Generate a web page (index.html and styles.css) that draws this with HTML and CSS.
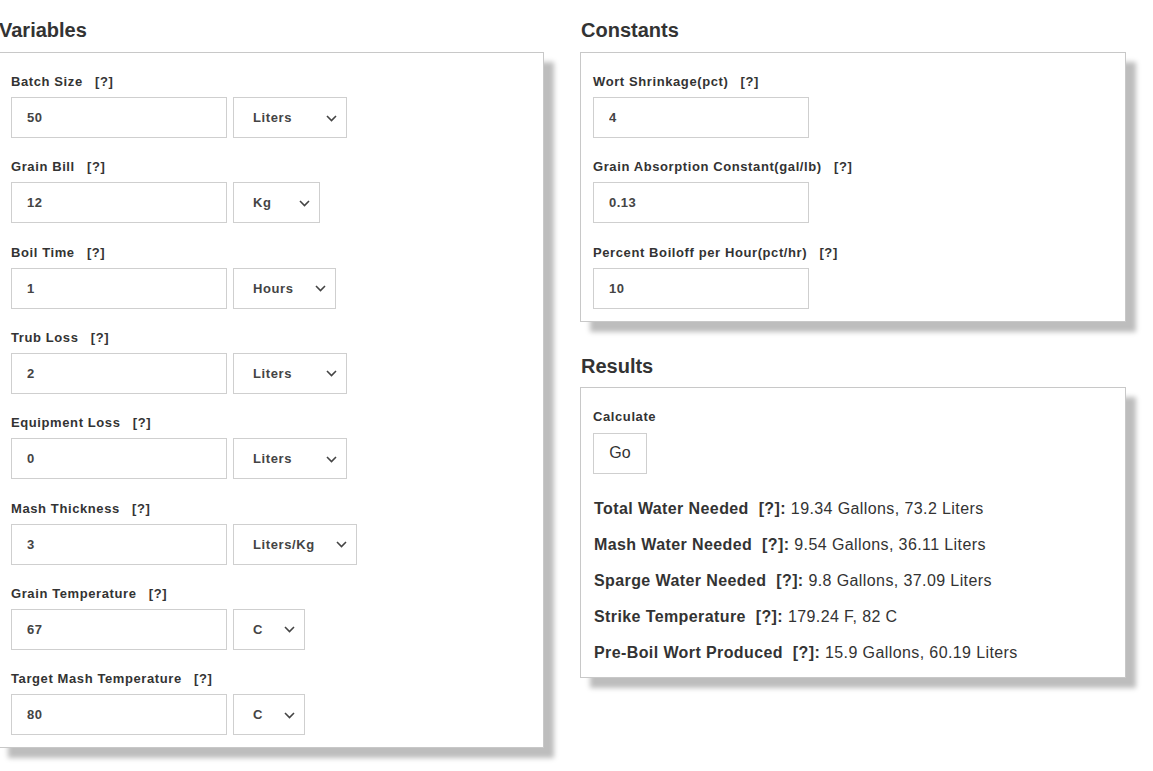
FILE: index.html
```html
<!DOCTYPE html>
<html>
<head>
<meta charset="utf-8">
<link rel="stylesheet" href="styles.css">
</head>
<body>
<div class="page">
  <section class="col">
    <h2 class="heading">Variables</h2>
    <div class="panel">
      <div class="field">
        <label class="label">Batch Size <span class="help">[?]</span></label>
        <div class="controls">
          <input class="num" type="text" value="50">
          <div class="select w-liters"><span>Liters</span><svg width="11" height="7" viewBox="0 0 11 7"><polyline points="1,1 5.5,5.5 10,1" fill="none" stroke="#444" stroke-width="1.6"/></svg></div>
        </div>
      </div>
      <div class="field">
        <label class="label">Grain Bill <span class="help">[?]</span></label>
        <div class="controls">
          <input class="num" type="text" value="12">
          <div class="select w-kg"><span>Kg</span><svg width="11" height="7" viewBox="0 0 11 7"><polyline points="1,1 5.5,5.5 10,1" fill="none" stroke="#444" stroke-width="1.6"/></svg></div>
        </div>
      </div>
      <div class="field">
        <label class="label">Boil Time <span class="help">[?]</span></label>
        <div class="controls">
          <input class="num" type="text" value="1">
          <div class="select w-hours"><span>Hours</span><svg width="11" height="7" viewBox="0 0 11 7"><polyline points="1,1 5.5,5.5 10,1" fill="none" stroke="#444" stroke-width="1.6"/></svg></div>
        </div>
      </div>
      <div class="field">
        <label class="label">Trub Loss <span class="help">[?]</span></label>
        <div class="controls">
          <input class="num" type="text" value="2">
          <div class="select w-liters"><span>Liters</span><svg width="11" height="7" viewBox="0 0 11 7"><polyline points="1,1 5.5,5.5 10,1" fill="none" stroke="#444" stroke-width="1.6"/></svg></div>
        </div>
      </div>
      <div class="field">
        <label class="label">Equipment Loss <span class="help">[?]</span></label>
        <div class="controls">
          <input class="num" type="text" value="0">
          <div class="select w-liters"><span>Liters</span><svg width="11" height="7" viewBox="0 0 11 7"><polyline points="1,1 5.5,5.5 10,1" fill="none" stroke="#444" stroke-width="1.6"/></svg></div>
        </div>
      </div>
      <div class="field">
        <label class="label">Mash Thickness <span class="help">[?]</span></label>
        <div class="controls">
          <input class="num" type="text" value="3">
          <div class="select w-lkg"><span>Liters/Kg</span><svg width="11" height="7" viewBox="0 0 11 7"><polyline points="1,1 5.5,5.5 10,1" fill="none" stroke="#444" stroke-width="1.6"/></svg></div>
        </div>
      </div>
      <div class="field">
        <label class="label">Grain Temperature <span class="help">[?]</span></label>
        <div class="controls">
          <input class="num" type="text" value="67">
          <div class="select w-c"><span>C</span><svg width="11" height="7" viewBox="0 0 11 7"><polyline points="1,1 5.5,5.5 10,1" fill="none" stroke="#444" stroke-width="1.6"/></svg></div>
        </div>
      </div>
      <div class="field">
        <label class="label">Target Mash Temperature <span class="help">[?]</span></label>
        <div class="controls">
          <input class="num" type="text" value="80">
          <div class="select w-c"><span>C</span><svg width="11" height="7" viewBox="0 0 11 7"><polyline points="1,1 5.5,5.5 10,1" fill="none" stroke="#444" stroke-width="1.6"/></svg></div>
        </div>
      </div>
    </div>
  </section>

  <section class="col">
    <h2 class="heading">Constants</h2>
    <div class="panel">
      <div class="field">
        <label class="label">Wort Shrinkage(pct) <span class="help">[?]</span></label>
        <div class="controls"><input class="num" type="text" value="4"></div>
      </div>
      <div class="field">
        <label class="label">Grain Absorption Constant(gal/lb) <span class="help">[?]</span></label>
        <div class="controls"><input class="num" type="text" value="0.13"></div>
      </div>
      <div class="field">
        <label class="label">Percent Boiloff per Hour(pct/hr) <span class="help">[?]</span></label>
        <div class="controls"><input class="num" type="text" value="10"></div>
      </div>
    </div>

    <h2 class="heading results-heading">Results</h2>
    <div class="panel">
      <label class="label">Calculate</label>
      <button class="go" type="button">Go</button>
      <ul class="results">
        <li><b>Total Water Needed <span class="rhelp">[?]:</span></b> 19.34 Gallons, 73.2 Liters</li>
        <li><b>Mash Water Needed <span class="rhelp">[?]:</span></b> 9.54 Gallons, 36.11 Liters</li>
        <li><b>Sparge Water Needed <span class="rhelp">[?]:</span></b> 9.8 Gallons, 37.09 Liters</li>
        <li><b>Strike Temperature <span class="rhelp">[?]:</span></b> 179.24 F, 82 C</li>
        <li><b>Pre-Boil Wort Produced <span class="rhelp">[?]:</span></b> 15.9 Gallons, 60.19 Liters</li>
      </ul>
    </div>
  </section>
</div>
</body>
</html>
```

FILE: styles.css
```css
* { box-sizing: border-box; }

html, body {
  margin: 0;
  padding: 0;
  background: #fff;
}

body {
  font-family: "Liberation Sans", Arial, sans-serif;
  color: #333;
}

.page {
  display: grid;
  grid-template-columns: 546px 546px;
  column-gap: 36px;
  align-items: start;
  padding-top: 18px;
  padding-bottom: 18px;
  margin-left: -2px;
}

.col {
  display: flex;
  flex-direction: column;
}

.heading {
  margin: 0 0 10px 1px;
  font-size: 20px;
  line-height: 24px;
  font-weight: bold;
  color: #333;
}

.results-heading {
  margin-top: 32px;
  margin-bottom: 9px;
}

.panel {
  border: 1px solid #c8c8c8;
  background: #fff;
  padding: 20px 12px 12px 12px;
  box-shadow: 10px 10px 5px #bdbdbd;
}

.field {
  margin-bottom: 20.33px;
}
.field:last-child {
  margin-bottom: 0;
}

.label {
  display: block;
  font-size: 13px;
  line-height: 17px;
  font-weight: bold;
  letter-spacing: 0.6px;
  color: #333;
  margin-bottom: 7px;
}

.help {
  margin-left: 8px;
}

.controls {
  display: flex;
  gap: 6px;
}

.num {
  width: 216px;
  height: 41px;
  border: 1px solid #cfcfcf;
  padding: 0 0 0 15px;
  margin: 0;
  font-family: "Liberation Sans", Arial, sans-serif;
  font-size: 13px;
  font-weight: bold;
  letter-spacing: 0.5px;
  color: #444;
  background: #fff;
  outline: none;
}

.select {
  height: 41px;
  border: 1px solid #cfcfcf;
  background: #fff;
  display: flex;
  align-items: center;
  justify-content: space-between;
  padding: 0 9px 0 19px;
  font-size: 13px;
  font-weight: bold;
  letter-spacing: 0.6px;
  color: #444;
}

.select svg {
  display: block;
  margin-top: 1px;
}

.w-liters { width: 114px; }
.w-kg { width: 87px; }
.w-hours { width: 103px; }
.w-lkg { width: 124px; }
.w-c { width: 72px; }

.go {
  display: block;
  margin-top: 8px;
  width: 54px;
  height: 41px;
  border: 1px solid #cfcfcf;
  background: #fff;
  font-family: "Liberation Sans", Arial, sans-serif;
  font-size: 16px;
  color: #333;
  padding: 0;
}

.results {
  list-style: none;
  margin: 23px 0 0 0;
  padding: 0 0 0 1px;
  display: flex;
  flex-direction: column;
  gap: 12px;
}

.results li {
  font-size: 16px;
  line-height: 24px;
  letter-spacing: 0.4px;
  color: #333;
}

.results b {
  font-weight: bold;
}

.rhelp {
  margin-left: 5px;
}
```
